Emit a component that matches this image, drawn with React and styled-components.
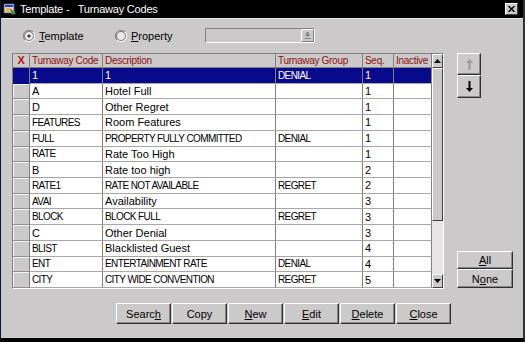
import React from 'react';
import styled, { createGlobalStyle } from 'styled-components';

const face = '#cbc9c9';

const GlobalStyle = createGlobalStyle`
  html, body { margin: 0; padding: 0; background: #fff; }
  body { font-family: "Liberation Sans", Arial, sans-serif; font-size: 11px; color: #000; }
`;

const Window = styled.div`
  width: 525px;
  height: 342px;
  box-sizing: border-box;
  background: ${face};
  border-left: 1px solid #0c1440;
  border-right: 2px solid #303030;
  border-bottom: 4px solid #000;
  display: flex;
  flex-direction: column;
`;

const TitleBar = styled.div`
  height: 18px;
  flex: none;
  background: #000;
  color: #fff;
  display: flex;
  align-items: center;
  padding: 0 5px 0 2px;
  font-size: 11px;
  letter-spacing: -0.2px;
  white-space: pre;
`;

const TitleText = styled.span`
  flex: 1;
  margin-left: 3px;
`;

const CloseBox = styled.div`
  width: 11px;
  height: 10px;
  background: ${face};
  color: #000;
  border: 1px solid;
  border-color: #fff #404040 #404040 #fff;
  display: flex;
  align-items: center;
  justify-content: center;
`;

const Body = styled.div`
  flex: 1;
  display: flex;
  flex-direction: column;
  padding: 9px 0 0 11px;
  border-top: 1px solid #e8e8e8;
`;

const RadioRow = styled.div`
  display: flex;
  align-items: center;
  height: 15px;
  padding-left: 11px;
`;

const RadioOption = styled.label`
  display: flex;
  align-items: center;
  gap: 4px;
  width: ${p => p.$w}px;
`;

const Drop = styled.div`
  display: flex;
  width: 110px;
  height: 15px;
  box-sizing: border-box;
  border: 1px solid;
  border-color: #808080 #fff #fff #808080;
  background: ${face};
`;

const DropBtn = styled.div`
  margin-left: auto;
  width: 13px;
  box-sizing: border-box;
  border: 1px solid;
  border-color: #fff #808080 #808080 #fff;
  display: flex;
  align-items: center;
  justify-content: center;
`;

const MainRow = styled.div`
  display: flex;
  margin-top: 10px;
  height: 236px;
`;

const Grid = styled.div`
  display: flex;
  width: 432px;
  box-sizing: border-box;
  border: 1px solid;
  border-color: #808080 #fff #fff #808080;
  background: #b8b6b6;
`;

const Table = styled.div`
  width: 419px;
  display: flex;
  flex-direction: column;
`;

const cols = '17px 73px 173px 87px 31px 38px';

const HeadRow = styled.div`
  display: grid;
  grid-template-columns: ${cols};
  height: 14px;
  background: ${face};
  color: #8b1010;
`;

const HeadCell = styled.div`
  border-right: 1px solid #808080;
  border-bottom: 1px solid #808080;
  padding-left: 2px;
  display: flex;
  align-items: center;
  font-size: 10px;
  letter-spacing: -0.3px;
  white-space: nowrap;
  overflow: hidden;
  ${p => p.$x && 'color:#c01010;font-weight:bold;justify-content:center;padding:0;font-size:11px;'}
`;

const Row = styled.div`
  display: grid;
  grid-template-columns: ${cols};
  height: 15.77px;
  background: ${p => (p.$sel ? '#0a0a8c' : '#fff')};
  color: ${p => (p.$sel ? '#fff' : '#000')};
`;

const Marker = styled.div`
  background: ${p => (p.$sel ? '#0a0a8c' : face)};
  border-right: 1px solid #808080;
  border-bottom: 1px solid ${p => (p.$sel ? '#0a0a8c' : '#909090')};
  box-shadow: inset 1px 1px 0 ${p => (p.$sel ? '#0a0a8c' : '#f4f4f4')};
`;

const Cell = styled.div`
  border-right: 1px solid #808080;
  border-bottom: 1px solid #a8a8a8;
  padding-left: 2px;
  display: flex;
  align-items: center;
  white-space: nowrap;
  overflow: hidden;
  font-size: ${p => (p.$caps ? '10px' : '11px')};
  letter-spacing: ${p => (p.$caps ? '-0.6px' : '0')};
`;

const ScrollBar = styled.div`
  width: 11px;
  display: flex;
  flex-direction: column;
  background: #e6e4e4;
`;

const SBtn = styled.div`
  height: 14px;
  flex: none;
  box-sizing: border-box;
  background: ${face};
  border: 1px solid;
  border-color: #fff #404040 #404040 #fff;
  display: flex;
  align-items: center;
  justify-content: center;
`;

const Thumb = styled.div`
  height: 153px;
  box-sizing: border-box;
  background: ${face};
  border: 1px solid;
  border-color: #fff #404040 #404040 #fff;
`;

const Track = styled.div`
  flex: 1;
`;

const Side = styled.div`
  margin-left: 13px;
  display: flex;
  flex-direction: column;
  justify-content: space-between;
  padding-bottom: 1px;
`;

const Stack = styled.div`
  display: flex;
  flex-direction: column;
`;

const Button = styled.div`
  width: ${p => p.$w}px;
  height: ${p => p.$h}px;
  box-sizing: border-box;
  background: ${face};
  border: 1px solid;
  border-color: #fff #303030 #303030 #fff;
  box-shadow: inset -1px -1px 0 #888;
  display: flex;
  align-items: center;
  justify-content: center;
  font-size: 11px;
`;

const BottomBar = styled.div`
  display: flex;
  gap: 1px;
  margin-top: 14px;
  padding-left: 104px;
`;

const U = styled.span`
  text-decoration: underline;
`;

const Radio = ({ checked }) => (
  <svg width="12" height="12" viewBox="0 0 12 12">
    <path d="M10 2 A5.5 5.5 0 0 0 2 10" stroke="#808080" fill="none" />
    <path d="M2 10 A5.5 5.5 0 0 0 10 2" stroke="#fff" fill="none" />
    <circle cx="6" cy="6" r="4.5" fill="#e8e8e8" stroke="#404040" strokeWidth="0.6" />
    {checked && <circle cx="6" cy="6" r="1.6" fill="#303030" />}
  </svg>
);

const Tri = ({ up }) => (
  <svg width="7" height="4" viewBox="0 0 7 4">
    <path d={up ? 'M0 4 L3.5 0 L7 4 Z' : 'M0 0 L3.5 4 L7 0 Z'} fill="#000" />
  </svg>
);

const Arrow = ({ up, color }) => (
  <svg width="9" height="12" viewBox="0 0 9 12">
    {up ? (
      <path d="M4.5 1 L8 5 L5.5 5 L5.5 12 L3.5 12 L3.5 5 L1 5 Z" fill={color} />
    ) : (
      <path d="M3.5 0 L5.5 0 L5.5 7 L8 7 L4.5 11 L1 7 L3.5 7 Z" fill={color} />
    )}
  </svg>
);

const AppIcon = () => (
  <svg width="14" height="14" viewBox="0 0 14 14">
    <rect x="1" y="2" width="10" height="9" fill="#d8d8f0" stroke="#5050a0" strokeWidth="0.8" />
    <rect x="2" y="3" width="8" height="2" fill="#2040c0" />
    <circle cx="5" cy="8" r="2.5" fill="#e8c020" />
    <path d="M7 6 L13 12 L9 13 Z" fill="#c02020" />
    <rect x="8" y="9" width="4" height="3" fill="#20a040" />
  </svg>
);

const rows = [
  ['1', '1', 'DENIAL', '1'],
  ['A', 'Hotel Full', '', '1'],
  ['D', 'Other Regret', '', '1'],
  ['FEATURES', 'Room Features', '', '1'],
  ['FULL', 'PROPERTY FULLY COMMITTED', 'DENIAL', '1'],
  ['RATE', 'Rate Too High', '', '1'],
  ['B', 'Rate too high', '', '2'],
  ['RATE1', 'RATE NOT AVAILABLE', 'REGRET', '2'],
  ['AVAI', 'Availability', '', '3'],
  ['BLOCK', 'BLOCK FULL', 'REGRET', '3'],
  ['C', 'Other Denial', '', '3'],
  ['BLIST', 'Blacklisted Guest', '', '4'],
  ['ENT', 'ENTERTAINMENT RATE', 'DENIAL', '4'],
  ['CITY', 'CITY WIDE CONVENTION', 'REGRET', '5'],
];

const isCaps = s => s.length > 1 && s === s.toUpperCase() && /[A-Z]/.test(s);

const actions = [
  ['Searc', 'h', ''],
  ['Copy', '', ''],
  ['', 'N', 'ew'],
  ['', 'E', 'dit'],
  ['', 'D', 'elete'],
  ['', 'C', 'lose'],
];

const App = () => (
  <>
    <GlobalStyle />
    <Window>
      <TitleBar>
        <AppIcon />
        <TitleText>{'Template -   Turnaway Codes'}</TitleText>
        <CloseBox>
          <svg width="7" height="6" viewBox="0 0 7 6">
            <path d="M0.5 0 L6.5 6 M6.5 0 L0.5 6" stroke="#000" strokeWidth="1.4" />
          </svg>
        </CloseBox>
      </TitleBar>
      <Body>
        <RadioRow>
          <RadioOption $w={92}>
            <Radio checked />
            <span><U>T</U>emplate</span>
          </RadioOption>
          <RadioOption $w={90}>
            <Radio />
            <span><U>P</U>roperty</span>
          </RadioOption>
          <Drop>
            <DropBtn>
              <svg width="7" height="7" viewBox="0 0 7 7">
                <path d="M2.5 0 H4.5 V2.5 H6.5 L3.5 5 L0.5 2.5 H2.5 Z" fill="#808080" />
                <rect x="0.5" y="6" width="6" height="1" fill="#808080" />
              </svg>
            </DropBtn>
          </Drop>
        </RadioRow>
        <MainRow>
          <Grid>
            <Table>
              <HeadRow>
                <HeadCell $x>X</HeadCell>
                <HeadCell>Turnaway Code</HeadCell>
                <HeadCell>Description</HeadCell>
                <HeadCell>Turnaway Group</HeadCell>
                <HeadCell>Seq.</HeadCell>
                <HeadCell>Inactive</HeadCell>
              </HeadRow>
              {rows.map((r, i) => (
                <Row key={r[0]} $sel={i === 0}>
                  <Marker $sel={i === 0} />
                  {r.map((v, j) => (
                    <Cell key={j} $caps={isCaps(v)}>{v}</Cell>
                  ))}
                  <Cell />
                </Row>
              ))}
            </Table>
            <ScrollBar>
              <SBtn><Tri up /></SBtn>
              <Thumb />
              <Track />
              <SBtn><Tri /></SBtn>
            </ScrollBar>
          </Grid>
          <Side>
            <Stack>
              <Button $w={24} $h={22}><Arrow up color="#9a9a9a" /></Button>
              <Button $w={24} $h={23}><Arrow color="#000" /></Button>
            </Stack>
            <Stack>
              <Button $w={56} $h={18}><U>A</U>ll</Button>
              <Button $w={56} $h={19}>N<U>o</U>ne</Button>
            </Stack>
          </Side>
        </MainRow>
        <BottomBar>
          {actions.map(([a, u, b]) => (
            <Button key={a + u + b} $w={55} $h={21}>
              {a}{u && <U>{u}</U>}{b}
            </Button>
          ))}
        </BottomBar>
      </Body>
    </Window>
  </>
);

export default App;
